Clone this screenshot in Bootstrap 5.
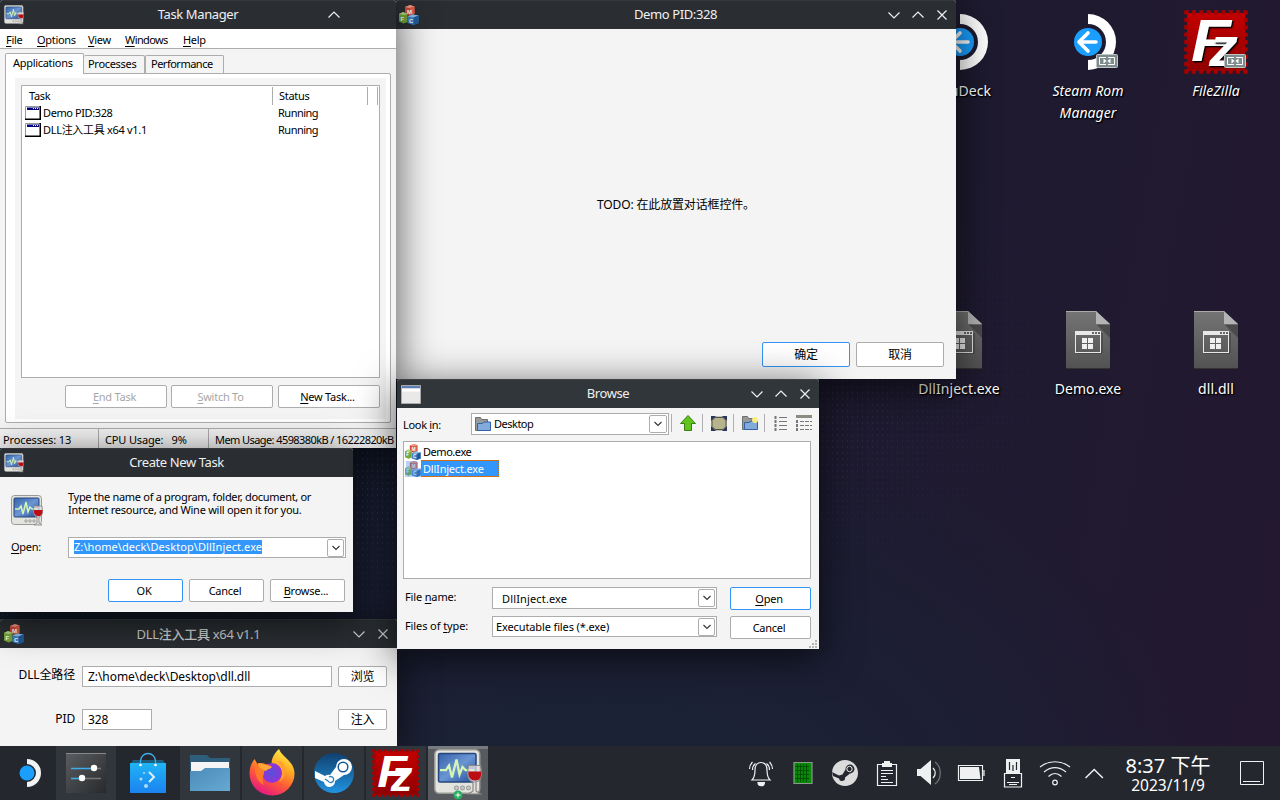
<!DOCTYPE html>
<html lang="zh">
<head>
<meta charset="utf-8">
<title>Desktop</title>
<link rel="stylesheet" href="https://cdn.jsdelivr.net/npm/bootstrap@5.3.0/dist/css/bootstrap.min.css">
<script src="https://cdn.jsdelivr.net/npm/bootstrap@5.3.0/dist/js/bootstrap.bundle.min.js"></script>
<style>
body{width:1280px;height:800px;overflow:hidden;font-family:"Noto Sans","Noto Sans CJK SC",sans-serif;font-size:11px;line-height:14px;letter-spacing:-.3px;color:#000;
background:radial-gradient(ellipse 620px 420px at 600px 830px,#1a2436 0,#1c1f34 55%,rgba(30,27,48,0) 100%),linear-gradient(100deg,#10202e 0,#141a2b 32%,#1d1a2f 62%,#201a30 80%,#23182f 100%)}
svg{display:block;flex:none}
.desk{width:1280px;height:746px;overflow:hidden}
.dots{inset:0;background:radial-gradient(circle,rgba(130,140,200,.15) .7px,transparent 1px) 0 0/5px 6px;-webkit-mask:linear-gradient(172deg,transparent 33%,#000 50%,#000 60%,transparent 78%),linear-gradient(90deg,#000 60%,transparent 85%);-webkit-mask-composite:source-in;mask-composite:intersect}
.win{background:#f4f4f4;box-shadow:0 8px 38px 2px rgba(0,0,0,.62);border-radius:3px 3px 0 0}
.ttl{height:29px;background:#2a2e32;color:#eff0f1;font-size:13px;letter-spacing:-.4px;border-radius:3px 3px 0 0;border-top:1px solid #34383c;padding-bottom:1px}
.ttl .side{flex:1 1 0;min-width:0}
.ttl .side:first-child{margin-right:-4px}
.ttl>div:nth-child(2){margin-top:-2px}
.cap{width:24px;height:27px}
.cap:last-child{margin-right:2px}
.w-tm .cap:last-child{margin-right:50px}
.w-tm{left:0;top:0;width:396px;height:448px;z-index:3}
.w-demo{left:396px;top:0;width:560px;height:379px;z-index:2}
.w-new{left:0;top:448px;width:353px;height:164px;z-index:4}
.w-dll{left:0;top:619px;width:397px;height:128px;z-index:1}
.w-br{left:397px;top:379px;width:422px;height:270px;z-index:5}
.w-br .ttl{background:#31363b;border-top-color:#3d4247}
.w-dll .ttl{color:#cfd0d1}
u{text-underline-offset:2px}
.menu{height:20px;background:#fff;border-bottom:1px solid #adadad;padding:4px 0 0 6px}
.tabx{border:1px solid #adadad;border-bottom:0;border-radius:2px 2px 0 0;background:#f4f4f4;height:18px;line-height:15px;white-space:nowrap}
.tabx.on{background:#fff;height:21px;margin-bottom:-1px;z-index:1;line-height:17px}
.panel{border:1px solid #adadad;background:#fff;border-radius:0 2px 2px 2px;width:386px;height:350px;padding:4px 4px 4px 9px}
.pin{background:#f4f4f4;height:341px;padding:7px 6px 0}
.lst{background:#fff;border:1px solid #adadad}
.bt{--bs-btn-padding-x:0;--bs-btn-padding-y:0;--bs-btn-font-size:11px;--bs-btn-line-height:1;--bs-btn-border-radius:2px;--bs-btn-bg:#fff;--bs-btn-border-color:#adadad;--bs-btn-color:#000;height:23px;color:#000;background:#fff;letter-spacing:-.25px;padding-right:3px}
.bt.cj{padding-right:0}
.bt.pri{border-color:#3294f5}
.bt.off{color:#a6a6a6}
.fld{background:#fff;border:1px solid #adadad;white-space:nowrap;letter-spacing:-.06px}
.dd{width:18px;height:18px;border:1px solid #adadad;border-radius:2px;background:#fff;flex:none}
.stat{height:20px;border-top:1px solid #adadad;overflow:hidden;white-space:nowrap;letter-spacing:-.1px}
.stat>div{padding-top:4px;flex:none}
.sep{width:1px;background:#adadad;flex:none}
.sel{background:#3296fa;color:#fff}
.cj{font-size:12px;letter-spacing:-.15px}
.ico{width:128px;color:#fff;font-size:14px;line-height:22px;letter-spacing:.06px;text-align:center;text-shadow:1px 1px 2px #000,1px 1px 1px #000}
.bar{height:54px;background:#24272d;letter-spacing:0}
.tk{width:60px;height:54px;margin-right:2px;background:#31353c}
</style>
</head>
<body>
<svg width="0" height="0" class="position-absolute">
<defs>
<linearGradient id="gScr" x1="0" y1="0" x2="1" y2="1"><stop offset="0" stop-color="#3561a8"/><stop offset=".5" stop-color="#6a96d4"/><stop offset="1" stop-color="#244c93"/></linearGradient>
<linearGradient id="gFz" x1="0" y1="0" x2="0" y2="1"><stop offset="0" stop-color="#c40000"/><stop offset="1" stop-color="#8f0000"/></linearGradient>
<linearGradient id="gSt" x1="0" y1="0" x2="0" y2="1"><stop offset="0" stop-color="#10406f"/><stop offset="1" stop-color="#2193e0"/></linearGradient>
<linearGradient id="gBag" x1="0" y1="0" x2="0" y2="1"><stop offset="0" stop-color="#1fb4f5"/><stop offset="1" stop-color="#1c82f0"/></linearGradient>
<linearGradient id="gFold" x1="0" y1="0" x2="1" y2="1"><stop offset="0" stop-color="#4b8cb8"/><stop offset="1" stop-color="#66a9d3"/></linearGradient>
<linearGradient id="gDoc" x1="0" y1="0" x2="0" y2="1"><stop offset="0" stop-color="#747474"/><stop offset="1" stop-color="#525252"/></linearGradient>
<linearGradient id="gFox" x1=".8" y1="0" x2=".3" y2="1"><stop offset="0" stop-color="#fff44f"/><stop offset=".35" stop-color="#ffab22"/><stop offset=".65" stop-color="#ff5a36"/><stop offset="1" stop-color="#e31587"/></linearGradient>
<linearGradient id="gGray" x1="0" y1="0" x2="1" y2="1"><stop offset="0" stop-color="#5b5e61"/><stop offset="1" stop-color="#27292b"/></linearGradient>
<radialGradient id="gGlobe"><stop offset="0" stop-color="#5650d8"/><stop offset="1" stop-color="#9433d8"/></radialGradient>
<symbol id="tm" viewBox="0 0 32 32"><rect x=".5" y=".5" width="30" height="29" rx="3" fill="#e4e4df" stroke="#999a96"/><rect x="3" y="3" width="25" height="19" rx="1" fill="url(#gScr)" stroke="#26457c"/><path d="M4 14h4l2-3 2 8 3-12 2 10 2-5 2 2h6" fill="none" stroke="#d6f7b4" stroke-width="1.500"/><g fill="#ccc" stroke="#999" stroke-width=".7"><circle cx="15" cy="26" r="1.300"/><circle cx="19" cy="26" r="1.300"/><circle cx="23" cy="26" r="1.300"/></g><path d="M23 11h8c1 5 1 10-3 11v6l3 2h-8l3-2v-6c-4-1-4-6-3-11z" fill="#e6e0e0" fill-opacity=".75" stroke="#8c8686" stroke-width=".8"/><path d="M23 15h8.500c0 4-1 6-4 6s-5-2-4.500-6z" fill="#bd0d14"/></symbol>
<symbol id="mfc" viewBox="0 0 20 20"><path d="M6 2l5-2 4.500 1.500v7.500l-5 2-4.500-2z" fill="#cf4a38"/><path d="M6 2l5-2 4.500 1.500-5 1.500z" fill="#f09a88"/><path d="M11 3.500L15.500 1.500v7.500l-5 2z" fill="#e0614c"/><path d="M0 9l4-2 4.500 2v8l-4 1.500-4.500-2z" fill="#74a83a"/><path d="M0 9l4-2 4.500 2-4 1z" fill="#b9d884"/><path d="M8.500 11.500l5-2 6 1v7.500l-5 2-6-2z" fill="#3c82c6"/><path d="M8.500 11.500l5-2 6 1-5 2z" fill="#8fc1ea"/><path d="M14.500 12.500l5-2v7.500l-5 2z" fill="#1f5b9c"/><g fill="#fff" font-family="Liberation Sans" font-weight="700" font-size="6"><text x="8" y="8.500">M</text><text x="1.500" y="15.500">F</text><text x="10" y="18">C</text></g></symbol>
<symbol id="dn" viewBox="0 0 14 14"><path d="M1.500 4.500L7 10l5.500-5.500" fill="none" stroke="currentColor" stroke-width="1.200"/></symbol>
<symbol id="up" viewBox="0 0 14 14"><path d="M1.500 9.500L7 4l5.500 5.500" fill="none" stroke="currentColor" stroke-width="1.200"/></symbol>
<symbol id="cl" viewBox="0 0 14 14"><path d="M2.500 2.500l9 9m0-9l-9 9" fill="none" stroke="currentColor" stroke-width="1.200"/></symbol>
<symbol id="ddn" viewBox="0 0 10 10"><path d="M1.500 3L5 6.500 8.500 3" fill="none" stroke="#333" stroke-width="1.100"/></symbol>
<symbol id="fz" viewBox="0 0 64 64"><rect x="3" y="3" width="58" height="58" fill="url(#gFz)"/><rect x="2.500" y="2.500" width="59" height="59" fill="none" stroke="#a80000" stroke-width="4.500" stroke-dasharray="4.200 3.175" stroke-dashoffset="2"/><g fill="#fff" font-family="Liberation Sans" font-weight="700" font-style="italic"><text x="7" y="51" font-size="60" textLength="40" lengthAdjust="spacingAndGlyphs">F</text><text x="25" y="56" font-size="56" textLength="29" lengthAdjust="spacingAndGlyphs">z</text></g></symbol>
<symbol id="srm" viewBox="0 0 56 56"><path d="M28 0a28 28 0 0 1 0 56V46a18 18 0 0 0 0-36z" fill="#fff" transform="translate(-14)"/><circle cx="14" cy="28" r="14" fill="#1a9fff"/><path d="M5 28h17M14 19l-9 9 9 9" fill="none" stroke="#fff" stroke-width="3.600" stroke-linecap="round" stroke-linejoin="round"/></symbol>
<symbol id="lnk" viewBox="0 0 22 14"><rect x=".5" y=".5" width="21" height="13" rx="1" fill="#7f8c8d" stroke="#c0c6c7"/><path d="M10 3.500H3.500v7H10M12 3.500h6.500v7H12" fill="none" stroke="#fff"/><path d="M7.500 4.500l3 2.500-3 2.500zM14.500 4.500l-3 2.500 3 2.500z" fill="#fff"/></symbol>
<symbol id="doc" viewBox="0 0 44 58"><path d="M0 0h30l14 13v45H0z" fill="url(#gDoc)"/><path d="M31 14h13v13z" fill="#4b4b4b"/><path d="M30 0l14 13H30z" fill="#b4b4b4"/><path d="M0 57.500h44" stroke="#333"/><path d="M0 .5h30" stroke="#aaa"/><path d="M10 42h26V22" fill="none" stroke="#3c3c3c"/><rect x="9.500" y="20.500" width="25" height="21" fill="none" stroke="#e8e8e8"/><path d="M9 20h26v4H9z" fill="#e8e8e8"/><path d="M26 21h2v2h-2zM29 21h2v2h-2zM32 21h2v2h-2z" fill="#666"/><path d="M16 27h5v5h-5zM22 27h5v5h-5zM16 33h5v5h-5zM22 33h5v5h-5z" fill="#f0f0f0"/></symbol>
<symbol id="exe" viewBox="0 0 16 14"><path d="M.5.500h15v13H.5z" fill="#fff" stroke="#999"/><path d="M15.250 0v14M0 13.250h16" stroke="#000" stroke-width="1.500"/><path d="M2 1.500h12v2.500H2z" fill="#000080"/><path d="M8 2h1v1H8zM10 2h1v1h-1zM12 2h1v1h-1z" fill="#fff"/></symbol>
<symbol id="stm" viewBox="0 0 40 40"><path d="M1 18l10 5a6 6 0 0 1 5-1l6-8a8 8 0 1 1 8 8l-9 6a5.500 5.500 0 0 1-11 1L1 25z"/></symbol>
<symbol id="fold" viewBox="0 0 16 16"><path d="M.5 14.500V1.500h5l1 2h6v11z" fill="#9a9a9a" stroke="#6f6f6f"/><path d="M2.500 14.500v-7h5l1-1.500h7v8.500z" fill="#82abdc" stroke="#2f62a8"/></symbol>
</defs>
</svg>

<div class="desk position-relative">
  <div class="dots position-absolute"></div>

  <div class="ico position-absolute d-flex flex-column align-items-center" style="left:896px;top:14px"><svg width="56" height="56"><use href="#srm" transform="translate(14)"/></svg><div style="margin-top:10px">EmuDeck</div></div>
  <div class="ico position-absolute d-flex flex-column align-items-center fst-italic" style="left:1024px;top:14px"><svg width="60" height="56"><use href="#srm" width="56" height="56" x="16"/><use href="#lnk" x="38" y="40" width="22" height="14"/></svg><div style="margin-top:10px">Steam Rom<br>Manager</div></div>
  <div class="ico position-absolute d-flex flex-column align-items-center fst-italic" style="left:1152px;top:10px"><svg width="64" height="64"><use href="#fz" width="64" height="64"/><use href="#lnk" x="40" y="44" width="22" height="14"/></svg><div style="margin-top:6px">FileZilla</div></div>
  <div class="ico position-absolute d-flex flex-column align-items-center" style="left:895px;top:311px"><svg width="44" height="58" style="margin-left:2px"><use href="#doc"/></svg><div style="margin-top:9px">DllInject.exe</div></div>
  <div class="ico position-absolute d-flex flex-column align-items-center" style="left:1024px;top:311px"><svg width="44" height="58"><use href="#doc"/></svg><div style="margin-top:9px">Demo.exe</div></div>
  <div class="ico position-absolute d-flex flex-column align-items-center" style="left:1152px;top:311px"><svg width="44" height="58"><use href="#doc"/></svg><div style="margin-top:9px">dll.dll</div></div>

  <!-- Task Manager -->
  <section class="win w-tm position-absolute">
    <header class="ttl d-flex align-items-center"><div class="side ps-1"><svg width="20" height="20"><use href="#tm"/></svg></div><div>Task Manager</div><div class="side d-flex justify-content-end"><span class="cap d-flex align-items-center justify-content-center"><svg width="14" height="14"><use href="#up"/></svg></span></div></header>
    <nav class="menu d-flex"><span style="width:31px"><u>F</u>ile</span><span style="width:51px"><u>O</u>ptions</span><span style="width:37px"><u>V</u>iew</span><span style="width:58px;letter-spacing:-.6px"><u>W</u>indows</span><span><u>H</u>elp</span></nav>
    <div style="padding:4px 0 0 5px">
      <div class="d-flex align-items-end"><div class="tabx on position-relative" style="width:79px;padding-left:7px">Applications</div><div class="tabx border-start-0" style="width:61px;padding-left:4px">Processes</div><div class="tabx" style="width:79px;padding-left:5px;letter-spacing:-.5px">Performance</div></div>
      <div class="panel"><div class="pin">
        <div class="lst" style="height:293px;width:359px">
          <div class="d-flex" style="height:19px;padding-top:1px"><div style="width:250px;padding:2px 0 0 7px">Task</div><div class="sep"></div><div style="width:94px;padding:2px 0 0 6px">Status</div><div class="sep"></div><div style="width:9px"></div><div class="sep"></div></div>
          <div class="d-flex align-items-center" style="height:17px;padding:0 0 2px 3px"><svg width="16" height="14"><use href="#exe"/></svg><div style="width:237px;padding-left:2px;letter-spacing:-.4px">Demo PID:328</div><div style="letter-spacing:-.5px">Running</div></div>
          <div class="d-flex align-items-center" style="height:17px;padding:0 0 2px 3px"><svg width="16" height="14"><use href="#exe"/></svg><div style="width:237px;padding-left:2px">DLL注入工具 x64 v1.1</div><div style="letter-spacing:-.5px">Running</div></div>
        </div>
        <div class="d-flex" style="padding:7px 0 0 44px;gap:4px"><button class="btn bt off" style="width:102px"><u>E</u>nd Task</button><button class="btn bt off" style="width:102px"><u>S</u>witch To</button><button class="btn bt" style="width:102px;margin-left:1px"><u>N</u>ew Task...</button></div>
      </div></div>
    </div>
    <div class="stat d-flex" style="margin-top:5px"><div style="width:98px;padding-left:3px">Processes: 13</div><span class="sep"></span><div style="width:109px;padding-left:6px;letter-spacing:-.15px">CPU Usage:&nbsp;&nbsp; 9%</div><span class="sep"></span><div style="padding-left:6px;letter-spacing:-.58px">Mem Usage: 4598380kB / 16222820kB</div></div>
  </section>

  <!-- MFC demo dialog -->
  <section class="win w-demo position-absolute d-flex flex-column">
    <header class="ttl d-flex align-items-center"><div class="side" style="padding-left:3px"><svg width="20" height="20"><use href="#mfc"/></svg></div><div>Demo PID:328</div><div class="side d-flex justify-content-end"><span class="cap d-flex align-items-center justify-content-center"><svg width="14" height="14"><use href="#dn"/></svg></span><span class="cap d-flex align-items-center justify-content-center"><svg width="14" height="14"><use href="#up"/></svg></span><span class="cap d-flex align-items-center justify-content-center"><svg width="14" height="14"><use href="#cl"/></svg></span></div></header>
    <div class="flex-fill d-flex align-items-center justify-content-center cj" style="height:0;padding-top:38px"><span>TODO: 在此放置对话框控件。</span></div>
    <div class="d-flex justify-content-end" style="gap:6px;padding:0 12px 12px"><button class="btn bt pri cj" style="width:88px;height:25px">确定</button><button class="btn bt cj" style="width:88px;height:25px">取消</button></div>
  </section>

  <!-- Create New Task -->
  <section class="win w-new position-absolute">
    <header class="ttl d-flex align-items-center"><div class="side ps-1"><svg width="20" height="20"><use href="#tm"/></svg></div><div>Create New Task</div><div class="side"></div></header>
    <div class="d-flex" style="padding:13px 0 0 11px;height:60px"><svg width="32" height="32" style="margin-top:5px"><use href="#tm"/></svg><div style="margin-left:25px;line-height:13px;white-space:nowrap">Type the name of a program, folder, document, or<br><span style="letter-spacing:-.26px">Internet resource, and Wine will open it for you.</span></div></div>
    <div class="d-flex align-items-center" style="padding-left:11px;height:21px"><div style="width:57px;margin-top:-2px"><u>O</u>pen:</div><div class="fld d-flex align-items-center justify-content-between" style="width:278px;height:21px;padding:0 1px 0 5px;letter-spacing:.07px"><span class="sel" style="margin-top:-2px">Z:\home\deck\Desktop\DllInject.exe</span><span class="dd d-flex align-items-center justify-content-center" style="width:17px"><svg width="10" height="10"><use href="#ddn"/></svg></span></div></div>
    <div class="d-flex" style="padding:21px 0 0 108px;gap:6px"><button class="btn bt pri" style="width:75px">OK</button><button class="btn bt" style="width:75px">Cancel</button><button class="btn bt" style="width:75px"><u>B</u>rowse...</button></div>
  </section>

  <!-- DLL injector -->
  <section class="win w-dll position-absolute">
    <header class="ttl d-flex align-items-center"><div class="side ps-1"><svg width="20" height="20"><use href="#mfc"/></svg></div><div style="padding-top:2px;letter-spacing:-.3px">DLL<span style="font-weight:500">注入工具</span> x64 v1.1</div><div class="side d-flex justify-content-end"><span class="cap d-flex align-items-center justify-content-center"><svg width="14" height="14"><use href="#dn"/></svg></span><span class="cap d-flex align-items-center justify-content-center"><svg width="14" height="14"><use href="#cl"/></svg></span></div></header>
    <div class="d-flex cj" style="padding-top:18px"><div class="text-end" style="width:75px;padding-top:2px">DLL全路径</div><div class="fld d-flex align-items-center" style="width:250px;height:21px;margin-left:7px;padding-left:5px">Z:\home\deck\Desktop\dll.dll</div><button class="btn bt cj" style="width:49px;height:21px;margin-left:6px">浏览</button></div>
    <div class="d-flex cj" style="padding-top:22px"><div class="text-end" style="width:75px;padding-top:3px">PID</div><div class="fld d-flex align-items-center" style="width:70px;height:21px;margin-left:7px;padding-left:5px">328</div><button class="btn bt cj" style="width:49px;height:21px;margin-left:186px">注入</button></div>
  </section>

  <!-- Browse -->
  <section class="win w-br position-absolute">
    <header class="ttl d-flex align-items-center"><div class="side" style="padding-left:4px"><svg width="20" height="20"><path d="M.5 1.500h19v18H.5z" fill="#e9e9e9" stroke="#aaa"/><path d="M1 2h18v2.500H1z" fill="#5d80b4"/><path d="M1 4.500h18v3H1z" fill="#fff"/></svg></div><div>Browse</div><div class="side d-flex justify-content-end"><span class="cap d-flex align-items-center justify-content-center"><svg width="14" height="14"><use href="#dn"/></svg></span><span class="cap d-flex align-items-center justify-content-center"><svg width="14" height="14"><use href="#up"/></svg></span><span class="cap d-flex align-items-center justify-content-center"><svg width="14" height="14"><use href="#cl"/></svg></span></div></header>
    <div class="d-flex" style="padding:5px 0 0 6px;height:33px">
      <div style="width:68px;padding-top:5px;letter-spacing:-.3px">Look <u>i</u>n:</div>
      <div class="fld d-flex align-items-center" style="width:198px;height:22px;padding:0 1px 0 3px;letter-spacing:-.5px"><svg width="16" height="16"><use href="#fold"/></svg><span style="margin-left:3px">Desktop</span><span class="dd ms-auto d-flex align-items-center justify-content-center"><svg width="10" height="10"><use href="#ddn"/></svg></span></div>
      <svg width="146" height="20" style="margin-left:2px"><path d="M.5 1v18M31.500 1v18M62.500 1v18M93.500 1v18" stroke="#b0b0b0"/>
        <path d="M17 2.500l7.500 8h-4v7h-7v-7h-4z" fill="#5fc41b" stroke="#3a7d10"/>
        <path d="M40.500 3.500h15v14h-15z" fill="#8a8f94"/><path d="M40 3h5l-5 5zM56 3h-5l5 5zM40 18h5l-5-5zM56 18h-5l5-5z" fill="#25375e"/><path d="M44 4.500h8l3 3v6l-3 3h-8l-3-3v-6z" fill="#b6b48e" stroke="#55533c"/>
        <use href="#fold" x="71" y="2" width="16" height="16"/><circle cx="84" cy="7" r="3" fill="#f8ee80"/>
        <g stroke="#777" fill="none"><path d="M108 4.500h8M108 8.500h8M108 12.500h8M108 16.500h8"/><path d="M104.500 3v3M104.500 7v3M104.500 11v3M104.500 15v3" stroke-width="2"/><path d="M125 3.500h16" stroke-width="3" stroke="#8b8b80"/><path d="M129 8.500h12M129 12.500h12M129 16.500h12" stroke-dasharray="4 1"/><path d="M126 7v3M126 11v3M126 15v3" stroke-width="2"/></g></svg>
    </div>
    <div class="lst" style="margin-left:6px;width:408px;height:138px;padding:2px 0 0 1px;letter-spacing:-.45px">
      <div class="d-flex align-items-center" style="height:16px"><svg width="16" height="16"><use href="#mfc"/></svg><div style="padding-left:2px">Demo.exe</div></div>
      <div class="d-flex align-items-center" style="height:17px;letter-spacing:-.2px"><svg width="16" height="16"><use href="#mfc"/><path d="M1 0h11v7h4v9H0V7h1z" fill="#4a90e0" fill-opacity=".4"/></svg><div class="sel" style="width:78px;height:17px;padding-left:1px;line-height:16px;border:1px dotted #d06a10">DllInject.exe</div></div>
    </div>
    <div class="d-flex" style="padding:8px 0 0 8px"><div style="width:87px;padding-top:3px;letter-spacing:-.15px">File <u>n</u>ame:</div><div class="fld d-flex align-items-center justify-content-between" style="width:225px;height:22px;padding:0 1px 0 9px"><span style="padding-top:2px;letter-spacing:.15px">DllInject.exe</span><span class="dd d-flex align-items-center justify-content-center" style="width:17px"><svg width="10" height="10"><use href="#ddn"/></svg></span></div><button class="btn bt pri" style="width:81px;margin-left:13px"><u>O</u>pen</button></div>
    <div class="d-flex" style="padding:6px 0 0 8px"><div style="width:87px;padding-top:3px;letter-spacing:-.1px">Files of <u>t</u>ype:</div><div class="fld d-flex align-items-center justify-content-between" style="width:225px;height:21px;padding:0 1px 0 3px;letter-spacing:-.12px"><span>Executable files (*.exe)</span><span class="dd d-flex align-items-center justify-content-center" style="width:17px"><svg width="10" height="10"><use href="#ddn"/></svg></span></div><button class="btn bt" style="width:81px;margin-left:13px">Cancel</button></div>
    <svg width="9" height="9" style="margin:1px 0 0 412px"><path d="M6 0h2v2H6zM3 3h2v2H3zM6 3h2v2H6zM0 6h2v2H0zM3 6h2v2H3zM6 6h2v2H6z" fill="#b4b4b4"/></svg>
  </section>
</div>

<footer class="bar d-flex">
  <svg width="56" height="54"><path d="M27 13a14 14 0 0 1 0 28v-5a9 9 0 0 0 0-18z" fill="#f2f2f2"/><circle cx="27" cy="27" r="7.500" fill="#1a9fff"/></svg>
  <div class="tk m-0"><svg width="60" height="54"><path d="M10 7h40v40H10z" fill="url(#gGray)"/><path d="M10 7.500h40" stroke="#888"/><path d="M15 22.500h22M15 32.500h10" stroke="#3daee9" stroke-width="1.500"/><path d="M38 22.500h7M26 32.500h19" stroke="#777" stroke-width="1.500"/><circle cx="38" cy="22" r="3.200" fill="#fff"/><circle cx="26" cy="32" r="3.200" fill="#fff"/></svg></div>
  <svg width="64" height="54"><path d="M17 14h30l3 5H14z" fill="#1c5f80"/><path d="M14 17h36v30H14z" fill="url(#gBag)"/><path d="M24.500 19v-4a7.500 7.500 0 0 1 15 0v4" fill="none" stroke="#3daee9" stroke-width="1.300"/><circle cx="24.500" cy="19" r="1.300" fill="#fff"/><circle cx="39.500" cy="19" r="1.300" fill="#fff"/><path d="M33 26l5 5-5 5" fill="none" stroke="#d9f1ff" stroke-width="2"/><g fill="#a9dcff"><circle cx="28" cy="27" r="1"/><circle cx="25" cy="33" r="1.500"/><circle cx="30" cy="40" r="2"/></g></svg>
  <div class="tk"><svg width="60" height="54"><path d="M10 9h17l3 3h20v12H10z" fill="#2f5d7c"/><path d="M11 16h38v12H11z" fill="#f4f4f4"/><path d="M10 25h11l4-3h25v23H10z" fill="url(#gFold)"/></svg></div>
  <div class="tk"><svg width="60" height="54"><path d="M37 3c3 8 15 12 15.500 24a22.500 22 0 0 1-45 1c0-7 2-11 5-15l3 5c1-1 3-1 5-1l5 3 4-2c0-6 3-11 7.500-15z" fill="url(#gFox)"/><circle cx="30" cy="27" r="10" fill="url(#gGlobe)"/><path d="M13 19c6-3 14-1 17 2-3 3-8 2-8 5s-3 8 0 13c-7-3-10-12-9-20z" fill="#ff7a28"/><path d="M16 17l8 2 6 2c-2 2-5 2-6 4-3-1-7-2-8-8z" fill="#ffa835"/><path d="M35 15c6 4 7 14 2 21 7-3 9-15 2-21z" fill="#ffa030"/></svg></div>
  <div class="tk"><svg width="60" height="54"><circle cx="30" cy="27" r="20" fill="url(#gSt)"/><use href="#stm" x="10" y="7" width="40" height="40" fill="#fff"/><circle cx="39" cy="21" r="4.800" fill="none" stroke="#175a96" stroke-width="1.500"/><path d="M21 33l3 2a3 3 0 1 0 1-4" fill="none" stroke="#2b83c4" stroke-width="1.300"/></svg></div>
  <div class="tk"><svg width="60" height="54"><use href="#fz" x="6" y="3" width="48" height="48"/></svg></div>
  <div class="tk" style="background:#575a5f;border-top:3px solid #777a7e"><svg width="60" height="51"><use href="#tm" x="6" y="0" width="48" height="48"/><circle cx="30" cy="46" r="4.500" fill="#27ae60"/><path d="M30 43.500v5M27.500 46h5" stroke="#fff"/></svg></div>

  <svg width="370" height="54" class="ms-auto" viewBox="740 0 370 54" fill="none" stroke="#eff0f1" stroke-width="1.200">
    <path d="M752 34c3-3 3-6 3-10 0-5 2.500-7.500 6-7.500s6 2.500 6 7.500c0 4 0 7 3 10z"/><path d="M758 36.500a3.200 3.200 0 0 0 6.400 0z" fill="#eff0f1"/><path d="M749.500 23c0-3 1-5 3-7M752.500 24c0-3 1-5 3-6.500M772.500 23c0-3-1-5-3-7M769.500 24c0-3-1-5-3-6.500"/>
    <path d="M794 16.500h18v21h-18z" fill="#078a07" stroke="#8c9a8c"/><path d="M797.500 18v18M800.500 18v18M803.500 18v18M806.500 18v18M795 20.500h14M795 24.500h14M795 28.500h14M795 32.500h14" stroke="#045004" stroke-width="1"/>
    <circle cx="845" cy="27" r="13" fill="#dcdcdc" stroke="none"/><path d="M832 26l7 3.500 3.500-1 3-5a4.500 4.500 0 1 1 4.500 4l-5 4a3 3 0 0 1-6 1l-6-2.500z" fill="#24272d" stroke="none"/><circle cx="849.500" cy="23" r="2.700" stroke-width="1"/>
    <path d="M877.500 18.500h19v21h-19z"/><path d="M882 17h2v-2h6v2h2v4h-10z" fill="#eff0f1" stroke="none"/><path d="M881 24.500h12M881 27.500h12M881 30.500h5M881 33.500h7M881 36.500h12" stroke-width="1"/>
    <path d="M917 23h3.500l10.500-9v25l-10.500-9H917z" fill="#eff0f1" stroke="none"/><path d="M933 22c3 3 3 7 0 10"/><path d="M935 16c7 5 7 17 0 22" stroke="#777"/>
    <path d="M958.500 19.500h24v15h-24zM984 24v6"/><path d="M960 21h19l1.500 12h-20.500z" fill="#eff0f1" stroke="none"/>
    <path d="M1006 13h14v14h-14z" fill="#eff0f1" stroke="none"/><path d="M1009.500 16v8M1013 19v6M1016.500 16v8" stroke="#24272d"/><path d="M1004.500 27.500h17v13.500h-17z"/><path d="M1007 36.500h12M1011 31.500h4M1009 38.500h8" stroke-width="1"/>
    <path d="M1040 21c9-7 21-7 30 0M1044 26c7-5.500 15-5.500 22 0M1048.500 30.500c4-4 9-4 13 0"/><circle cx="1055" cy="36.500" r="2.300"/>
    <path d="M1085.500 32l8.700-8.500 8.700 8.500" stroke-width="1.500"/>
  </svg>
  <div class="text-center text-white" style="width:116px;padding-top:7px;white-space:nowrap"><div style="font-size:20px;line-height:26px">8:37 下午</div><div style="font-size:15.500px;line-height:18px;margin-top:-3px">2023/11/9</div></div>
  <svg width="54" height="54" fill="none" stroke="#eff0f1"><path d="M14.500 15.500h23v23h-23zM17 35.500h17"/></svg>
</footer>
</body>
</html>
